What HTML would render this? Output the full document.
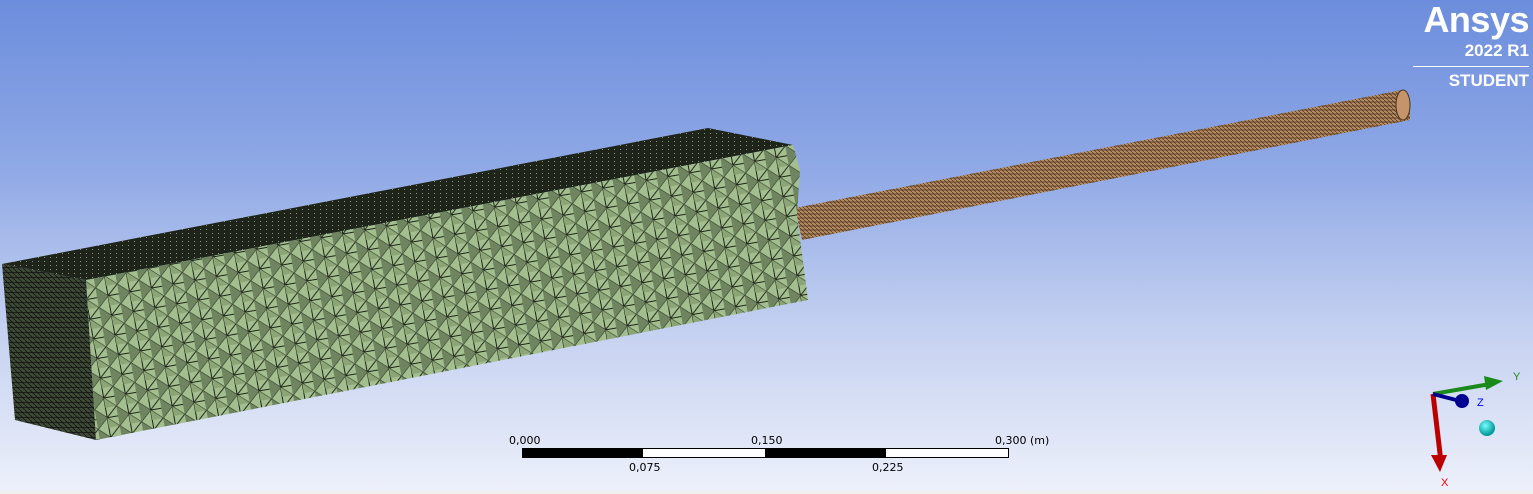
<!DOCTYPE html>
<html><head><style>
html,body{margin:0;padding:0}
body{width:1533px;height:494px;overflow:hidden;position:relative;font-family:"Liberation Sans",sans-serif;
background:linear-gradient(#6c8ddd 0%,#91aae6 35%,#c2cff0 65%,#eef1fb 100%)}
.logo{position:absolute;right:4px;top:0;color:#fff;text-align:right;font-weight:bold}
.t{position:absolute;font-size:11px;color:#000;font-family:"DejaVu Sans",sans-serif}
</style></head><body>
<svg width="1533" height="494" style="position:absolute;left:0;top:0">
<defs>
<pattern id="mf" width="22" height="20" patternUnits="userSpaceOnUse" patternTransform="rotate(-10)">
<rect width="22" height="20" fill="#a3bf8f"/>
<path d="M0 0L22 20M22 0L0 20M11 0V20M0 10H22" stroke="#1d2418" stroke-width="1"/>
<path d="M0 0L11 10L0 20Z" fill="#6f8560"/>
<path d="M11 10L22 20H11Z" fill="#8ba577"/>
</pattern>
<pattern id="md" width="5" height="5" patternUnits="userSpaceOnUse">
<rect width="5" height="5" fill="#3d4a35"/><path d="M0 0L5 5M0 2.5H5" stroke="#111" stroke-width="0.8"/>
</pattern>
<pattern id="mt" width="6" height="4" patternUnits="userSpaceOnUse">
<rect width="6" height="4" fill="#1e2419"/><rect x="2" y="1" width="1" height="1" fill="#7f9a70"/>
</pattern>
<pattern id="mr" width="4" height="4" patternUnits="userSpaceOnUse">
<rect width="4" height="4" fill="#b88b62"/><path d="M0 0L4 4M0 2H4" stroke="#4a3520" stroke-width="0.7"/>
</pattern>
<radialGradient id="cy" cx="0.4" cy="0.35" r="0.6"><stop offset="0" stop-color="#7ff"/><stop offset="1" stop-color="#099"/></radialGradient>
</defs>
<polygon points="795,208 1402,90 1410,104 1410,120 802,240" fill="url(#mr)"/>
<ellipse cx="1403" cy="105" rx="7" ry="15" fill="#c4956a" stroke="#4a3520"/>
<polygon points="2,264 708,128 793,145 86,280" fill="url(#mt)"/>
<polygon points="86,280 793,145 800,170 797,215 808,300 96,440" fill="url(#mf)"/>
<polygon points="2,264 86,280 96,440 15,420" fill="url(#md)"/>
<rect x="0" y="490" width="1533" height="4" fill="#f0f0f0"/>
<rect x="522.5" y="448.5" width="486" height="9" fill="#fff" stroke="#000"/>
<rect x="522" y="448" width="121" height="10" fill="#000"/>
<rect x="765" y="448" width="121" height="10" fill="#000"/>
<line x1="1433" y1="394" x2="1441" y2="462" stroke="#b00" stroke-width="5"/>
<polygon points="1431,455 1447,455 1440,472" fill="#b00"/>
<line x1="1433" y1="394" x2="1490" y2="384" stroke="#1a8a1a" stroke-width="4"/>
<polygon points="1484,376 1503,381 1486,390" fill="#1a8a1a"/>
<line x1="1433" y1="394" x2="1460" y2="401" stroke="#000090" stroke-width="4"/>
<circle cx="1462" cy="401" r="7" fill="#000090"/>
<circle cx="1487" cy="428" r="8" fill="url(#cy)"/>
<text x="1513" y="380" fill="#1a8a1a" font-size="11">Y</text>
<text x="1477" y="406" fill="#00f" font-size="11">Z</text>
<text x="1441" y="486" fill="#e00" font-size="11">X</text>
</svg>
<div class="logo">
<div style="font-size:36px;line-height:40px;letter-spacing:-0.5px">Ansys</div>
<div style="font-size:17px;line-height:22px">2022 R1</div>
<div style="border-top:1px solid #fff;width:116px;margin:4px 0 3px auto"></div>
<div style="font-size:17px;line-height:22px">STUDENT</div>
</div>
<div class="t" style="left:509px;top:434px">0,000</div>
<div class="t" style="left:751px;top:434px">0,150</div>
<div class="t" style="left:995px;top:434px">0,300 (m)</div>
<div class="t" style="left:629px;top:461px">0,075</div>
<div class="t" style="left:872px;top:461px">0,225</div>
</body></html>
